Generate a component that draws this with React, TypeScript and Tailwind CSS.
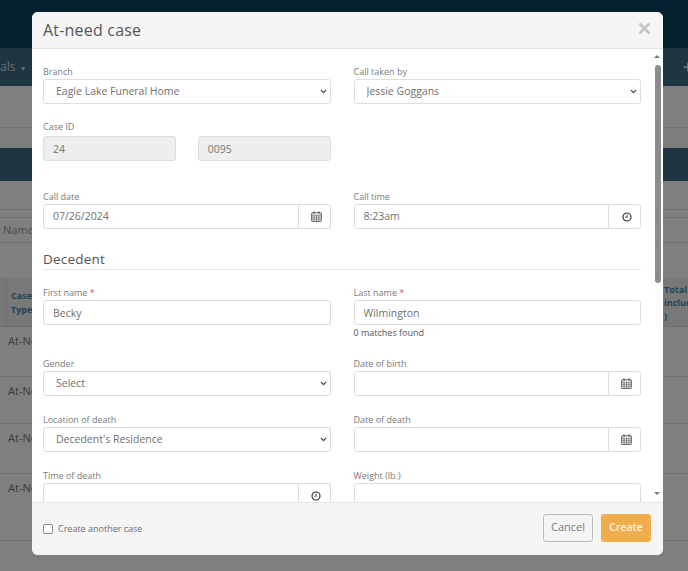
import type { ReactNode } from 'react'
import { ChevronDown, Plus, X } from 'lucide-react'

const FONT = "font-['Open_Sans','Noto_Sans',sans-serif]"
const SELECT =
  'block h-[25px] w-full appearance-none rounded-[3px] border border-[#dddddd] bg-white pl-3 text-[10.5px] text-[#6f6f6f] outline-none'
const INPUT =
  'block h-[25px] w-full rounded-[3px] border border-[#dddddd] bg-white pl-[9px] text-[10.5px] text-[#6f6f6f] outline-none'
const DISABLED =
  'block h-[25px] w-full rounded-[3px] border border-[#dddddd] bg-[#eeeeee] pl-[9px] text-[10.5px] text-[#777777] outline-none'

function CalendarIcon() {
  return (
    <svg width="11" height="11" viewBox="0 0 11 11" fill="none" stroke="#4a4a4a" strokeWidth="0.9">
      <rect x="0.7" y="1.8" width="9.6" height="8.6" rx="0.6" />
      <path d="M0.7 4.2h9.6M0.7 6.2h9.6M0.7 8.2h9.6M3.1 4.2v6.2M5.5 4.2v6.2M7.9 4.2v6.2" strokeWidth="0.6" />
      <path d="M3 0.4v2.2M8 0.4v2.2" strokeWidth="1.3" />
    </svg>
  )
}

function ClockIcon() {
  return (
    <svg width="10" height="10" viewBox="0 0 10 10" fill="none" stroke="#333333" strokeWidth="1.2">
      <circle cx="5" cy="5" r="4" />
      <path d="M5.2 2.6v2.6H3.2" strokeWidth="0.9" />
    </svg>
  )
}

function Label({ children, required }: { children: ReactNode; required?: boolean }) {
  return (
    <label className="mb-[1px] block h-[13px] text-[9px] leading-[13px] text-[#7a7a7a]">
      {children}
      {required && <span className="text-[#d9534f]"> *</span>}
    </label>
  )
}

function SelectField({ label, value }: { label: string; value: string }) {
  return (
    <div>
      <Label>{label}</Label>
      <div className="relative">
        <select defaultValue={value} className={SELECT}>
          <option>{value}</option>
        </select>
        <ChevronDown size={9} strokeWidth={3.5} className="pointer-events-none absolute right-[3px] top-[8px] text-[#444]" />
      </div>
    </div>
  )
}

function TextField({ label, value = '', required }: { label: string; value?: string; required?: boolean }) {
  return (
    <div>
      <Label required={required}>{label}</Label>
      <input readOnly value={value} className={INPUT} />
    </div>
  )
}

function AddonField({ label, value = '', icon }: { label: string; value?: string; icon: ReactNode }) {
  return (
    <div>
      <Label>{label}</Label>
      <div className="flex h-[25px] rounded-[3px] border border-[#dddddd] bg-white">
        <input readOnly value={value} className="block w-full min-w-0 flex-1 rounded-l-[3px] bg-white pl-[9px] text-[10.5px] text-[#6f6f6f] outline-none" />
        <span className="flex w-[32px] shrink-0 items-center justify-center border-l border-[#dddddd] pl-[4px]">{icon}</span>
      </div>
    </div>
  )
}

function PageBehind() {
  return (
    <div className="h-[571px] overflow-hidden bg-white text-[11px]">
      <div className="h-[48px] bg-[#06405e]" />
      <div className="flex h-[38px] items-center justify-between bg-[#3c6a84] text-[12px] text-[#dddddd]">
        <span className="whitespace-nowrap pl-0">
          als <span className="ml-[2px] text-[8px]">▾</span>
        </span>
        <Plus size={12} strokeWidth={4} className="mr-[-6px] text-[#dddddd]" />
      </div>
      <div className="h-[42px] border-b border-[#e6e6e6] bg-[#ffffff]" />
      <div className="h-[20px] bg-[#fbfbfb]" />
      <div className="h-[33px] bg-[#3c6a84]" />
      <div className="h-[29px] border-b border-[#dddddd] bg-white" />
      <div className="h-[8px] border-b border-[#dddddd] bg-white" />
      <div className="flex h-[25px] items-center border-b border-[#dddddd] bg-white pl-[3px] text-[#999999]">Name</div>
      <div className="h-[35px] bg-white" />
      <div className="flex h-[49px] border-b border-[#dddddd] bg-[#f0f0f0] text-[9px] font-bold leading-[14px] text-[#3f88b8]">
        <div className="w-[7px] shrink-0 border-r border-[#dddddd]" />
        <div className="w-[50px] shrink-0 pl-[4px] pt-[11px]">Case<br />Type</div>
        <div className="ml-[607px] shrink-0 pt-[5px] leading-[13px]">Total<br />includ<br />)</div>
      </div>
      {[50, 47, 50, 67].map((h, i) => (
        <div key={i} style={{ height: h }} className="border-b border-[#dddddd] bg-white pl-[8px] pt-[6px] text-[#777777]">
          At-Need
        </div>
      ))}
    </div>
  )
}

export default function App() {
  return (
    <div className={`relative h-[571px] w-[688px] overflow-hidden ${FONT}`}>
      <PageBehind />
      <div className="absolute inset-0 bg-black/50" />

      <div className="absolute left-[32px] top-[12px] flex h-[543px] w-[631px] flex-col overflow-hidden rounded-[6px] bg-white">
        <div className="flex h-[37px] shrink-0 items-center justify-between border-b border-[#e5e5e5] bg-[#f5f5f5] pl-[11px] pr-[10px]">
          <h2 className="text-[16px] tracking-[0.2px] text-[#555555]">At-need case</h2>
          <X size={17} strokeWidth={3.5} className="mb-[3px] text-[#c4c4c4]" />
        </div>

        <div className="relative min-h-0 flex-1 overflow-hidden pl-[11px] pr-[22px] pt-[16px]">
          <div className="grid grid-cols-2 gap-x-[23px]">
            <SelectField label="Branch" value="Eagle Lake Funeral Home" />
            <SelectField label="Call taken by" value="Jessie Goggans" />
          </div>

          <div className="mt-[16px] grid grid-cols-2 gap-x-[23px]">
            <div>
              <Label>Case ID</Label>
              <div className="mt-[3px] grid grid-cols-2 gap-x-[22px]">
                <input readOnly value="24" className={DISABLED} />
                <input readOnly value="0095" className={DISABLED} />
              </div>
            </div>
          </div>

          <div className="mt-[29px] grid grid-cols-2 gap-x-[23px]">
            <AddonField label="Call date" value="07/26/2024" icon={<CalendarIcon />} />
            <AddonField label="Call time" value="8:23am" icon={<ClockIcon />} />
          </div>

          <h3 className="mt-[20px] h-[21px] border-b border-[#e8e8e8] text-[13.5px] leading-[20px] tracking-[0.2px] text-[#555555]">
            Decedent
          </h3>

          <div className="mt-[16px] grid grid-cols-2 gap-x-[23px]">
            <TextField label="First name" value="Becky" required />
            <div>
              <TextField label="Last name" value="Wilmington" required />
              <p className="h-[15px] text-[9px] leading-[15px] text-[#555555]">0 matches found</p>
            </div>
          </div>

          <div className="mt-[17px] grid grid-cols-2 gap-x-[23px]">
            <SelectField label="Gender" value="Select" />
            <AddonField label="Date of birth" icon={<CalendarIcon />} />
          </div>

          <div className="mt-[17px] grid grid-cols-2 gap-x-[23px]">
            <SelectField label="Location of death" value="Decedent's Residence" />
            <AddonField label="Date of death" icon={<CalendarIcon />} />
          </div>

          <div className="mt-[17px] grid grid-cols-2 gap-x-[23px]">
            <AddonField label="Time of death" icon={<ClockIcon />} />
            <TextField label="Weight (lb.)" />
          </div>

          {/* scrollbar */}
          <div className="absolute bottom-0 right-0 top-0 w-[10px]">
            <span className="absolute left-[1px] top-[6px] border-x-[3px] border-b-[3px] border-x-transparent border-b-[#777777]" />
            <span className="absolute left-[2px] top-[16px] h-[218px] w-[6px] rounded-full bg-[#8c8c8c]" />
            <span className="absolute bottom-[7px] left-[1px] border-x-[3px] border-t-[3px] border-x-transparent border-t-[#777777]" />
          </div>
        </div>

        <div className="flex h-[53px] shrink-0 items-center justify-between border-t border-[#e5e5e5] bg-[#f5f5f5] pl-[11px] pr-[12px]">
          <label className="flex items-center gap-[5px] text-[9px] text-[#6f6f6f]">
            <input type="checkbox" className="h-[10px] w-[10px] appearance-none rounded-[2px] border border-[#8a8a8a] bg-white" />
            Create another case
          </label>
          <div className="mb-[3px] flex gap-[8px]">
            <button className="h-[28px] w-[50px] rounded-[3px] border border-[#bbbbbb] bg-[#f5f5f5] text-[11px] text-[#777777]">Cancel</button>
            <button className="h-[28px] w-[50px] rounded-[3px] bg-[#f0ad4e] text-[10.5px] font-semibold text-[#fdf3e3]">Create</button>
          </div>
        </div>
      </div>
    </div>
  )
}
